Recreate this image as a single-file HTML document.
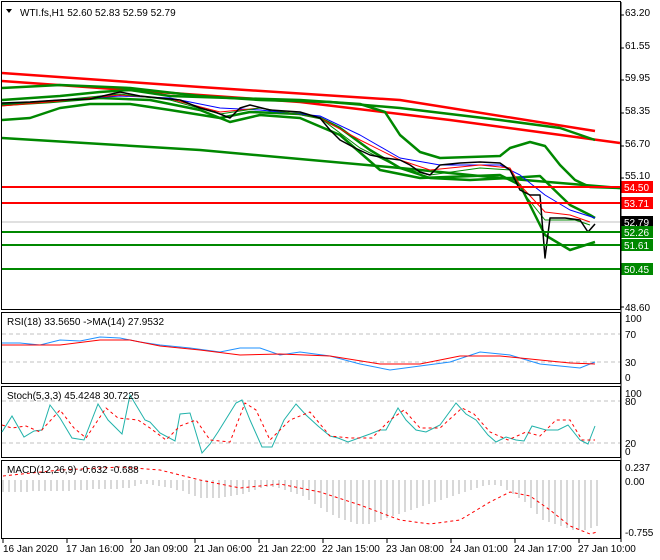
<!DOCTYPE html>
<html><head><style>
body{margin:0;background:#fff;}
svg{display:block;font-family:"Liberation Sans",sans-serif;}
.t{font-size:10px;fill:#000;}
</style></head><body>
<svg width="660" height="560" viewBox="0 0 660 560">
<rect width="660" height="560" fill="#fff"/>
<g fill="none" stroke="#000" stroke-width="1">
<rect x="1.5" y="1.5" width="619" height="308"/>
<rect x="1.5" y="312.5" width="619" height="71"/>
<rect x="1.5" y="386.5" width="619" height="71"/>
<rect x="1.5" y="460.5" width="619" height="78"/>
</g>
<g fill="none" stroke-linejoin="round">
<line x1="2" y1="222" x2="620" y2="222" stroke="#c0c0c0"/>
<polyline stroke="#f00" stroke-width="2.5" points="2,73 200,87 400,100 595,131"/>
<polyline stroke="#f00" stroke-width="2.5" points="2,81 100,88 300,102 450,120 620,143"/>
<polyline stroke="#080" stroke-width="2.5" points="2,138 200,150 400,168 500,178 620,188"/>
<polyline stroke="#080" stroke-width="2.5" points="2,88 60,85 130,88 200,96 260,100 330,102 400,108 500,120 560,128 595,140"/>
<polyline stroke="#080" stroke-width="2.5" points="2,100 60,96 100,92 130,90 170,96 230,98 300,100 360,104 385,112 400,135 420,152 440,158 500,156 510,148 530,142 545,146 560,165 575,180 590,187 620,188"/>
<polyline stroke="#080" stroke-width="2.5" points="2,120 30,118 60,108 90,104 130,104 170,110 220,118 250,112 300,114 320,118 340,128 370,150 400,168 430,178 470,180 510,178 540,176 570,205 590,215 595,218"/>
<polyline stroke="#080" stroke-width="2.5" points="2,105 50,102 100,98 150,100 200,110 230,122 260,115 300,118 340,135 380,170 420,178 500,175 520,185 545,235 570,250 595,242"/>
<polyline stroke="#00f" stroke-width="1" points="2,104 60,100 120,96 170,98 220,108 260,110 320,116 360,135 400,158 440,165 500,165 520,175 545,195 570,210 595,218"/>
<polyline stroke="#f00" stroke-width="1" points="2,106 60,101 120,95 170,99 220,112 260,108 320,118 360,140 400,160 430,170 480,165 510,168 520,185 545,212 570,215 590,222"/>
<polyline stroke="#080" stroke-width="1" points="2,104 60,100 120,94 170,100 220,114 260,108 320,118 360,148 400,168 430,175 480,168 510,170 525,195 545,220 575,220 590,225"/>
<polyline stroke="#000" stroke-width="1.5" points="2,103 30,102 60,100 90,99 120,92 140,96 160,98 180,100 200,108 215,112 230,118 240,108 250,105 270,110 300,112 320,118 330,130 340,140 355,148 370,155 385,158 400,160 410,165 420,172 430,175 440,165 460,163 480,162 500,163 510,170 520,190 530,195 540,195 545,258 550,218 565,218 580,220 588,232 595,224"/>
</g>
<g stroke="#f00" stroke-width="2">
<line x1="2" y1="187" x2="620" y2="187"/><line x1="2" y1="203" x2="620" y2="203"/>
</g>
<g stroke="#080" stroke-width="2">
<line x1="2" y1="232" x2="620" y2="232"/><line x1="2" y1="245" x2="620" y2="245"/><line x1="2" y1="269" x2="620" y2="269"/>
</g>
<rect x="621" y="181" width="32" height="12" fill="#f00"/><text x="624" y="191" class="t" style="fill:#fff">54.50</text>
<rect x="621" y="197" width="32" height="12" fill="#f00"/><text x="624" y="207" class="t" style="fill:#fff">53.71</text>
<rect x="621" y="216" width="32" height="12" fill="#000"/><text x="624" y="226" class="t" style="fill:#fff">52.79</text>
<rect x="621" y="226" width="32" height="12" fill="#080"/><text x="624" y="236" class="t" style="fill:#fff">52.26</text>
<rect x="621" y="239" width="32" height="12" fill="#080"/><text x="624" y="249" class="t" style="fill:#fff">51.61</text>
<rect x="621" y="263" width="32" height="12" fill="#080"/><text x="624" y="273" class="t" style="fill:#fff">50.45</text>
<text x="625" y="16" class="t">63.20</text>
<text x="625" y="49" class="t">61.55</text>
<text x="625" y="81" class="t">59.95</text>
<text x="625" y="114" class="t">58.35</text>
<text x="625" y="147" class="t">56.70</text>
<text x="625" y="179" class="t">55.10</text>
<text x="625" y="311" class="t">48.60</text>
<text x="20" y="16" class="t">WTI.fs,H1  52.60 52.83 52.59 52.79</text>
<polygon points="6,9 12,9 9,13" fill="#000"/>
<g stroke="#c0c0c0" stroke-dasharray="4,3"><line x1="2" y1="334" x2="620" y2="334"/><line x1="2" y1="362" x2="620" y2="362"/></g>
<polyline fill="none" stroke="#1e90ff" points="2,343 20,343 40,345 60,340 80,341 100,337 120,338 140,342 160,345 190,348 220,352 240,348 260,348 280,355 300,352 330,356 360,364 390,370 420,366 450,362 480,352 510,355 540,364 560,366 580,368 595,362"/>
<polyline fill="none" stroke="#f00" points="2,345 60,345 100,340 130,340 160,346 200,350 240,355 280,354 330,356 380,364 420,364 460,356 500,356 540,360 570,363 595,364"/>
<text x="7" y="325" class="t">RSI(18) 33.5650  -&gt;MA(14) 27.9532</text>
<text x="625" y="322" class="t">100</text><text x="625" y="338" class="t">70</text><text x="625" y="366" class="t">30</text><text x="625" y="381" class="t">0</text>
<g stroke="#c0c0c0" stroke-dasharray="4,3"><line x1="2" y1="401" x2="620" y2="401"/><line x1="2" y1="443" x2="620" y2="443"/></g>
<polyline fill="none" stroke="#20b2aa" points="2,432 12,416 24,437 34,431 42,430 50,405 60,418 72,438 84,440 98,404 108,420 122,434 130,395 145,420 150,422 160,433 175,441 180,414 190,413 202,453 210,444 218,432 236,403 242,400 250,420 262,447 272,447 284,420 296,404 306,415 318,426 330,436 338,438 348,442 370,434 380,430 386,430 398,408 406,420 416,430 426,432 440,425 456,403 466,414 476,420 488,435 496,442 506,437 516,440 524,441 532,426 546,430 558,430 568,425 580,440 588,444 595,426"/>
<polyline fill="none" stroke="#f00" stroke-dasharray="3,3" points="2,425 12,428 26,426 40,432 60,410 74,428 86,438 106,408 118,418 138,420 150,428 166,440 180,426 196,420 210,440 230,442 245,403 256,410 270,440 290,420 310,412 330,436 350,438 372,438 390,420 404,410 420,428 440,428 462,408 474,414 490,432 508,440 526,432 540,436 556,420 570,420 582,440 595,440"/>
<text x="7" y="399" class="t">Stoch(5,3,3) 45.4248 30.7225</text>
<text x="625" y="397" class="t">100</text><text x="625" y="405" class="t">80</text><text x="625" y="447" class="t">20</text><text x="625" y="455" class="t">0</text>
<g stroke="#b0b0b0" stroke-width="1">
<path d="M3 480v12M9 480v12M15 480v12M21 480v12M27 480v12M33 480v11M39 480v11M45 480v11M51 480v11M57 480v11M63 480v11M69 480v11M75 480v10M81 480v10M87 480v10M93 480v9M99 480v9M105 480v9M111 480v9M117 480v9M123 480v8M129 480v8M135 480v6M141 480v4M147 480v4M153 480v5M159 480v6M165 480v7M171 480v8M177 480v10M183 480v11M189 480v14M195 480v16M201 480v18M207 480v18M213 480v18M219 480v18M225 480v17M231 480v16M237 480v15M243 480v14M249 480v12M255 480v10M261 480v8M267 480v7M273 480v7M279 480v8M285 480v10M291 480v12M297 480v14M303 480v16M309 480v20M315 480v24M321 480v28M327 480v32M333 480v35M339 480v38M345 480v40M351 480v42M357 480v44M363 480v44M369 480v44M375 480v42M381 480v40M387 480v38M393 480v36M399 480v34M405 480v32M411 480v30M417 480v28M423 480v26M429 480v24M435 480v22M441 480v20M447 480v18M453 480v16M459 480v14M465 480v12M471 480v10M477 480v8M483 480v6M489 480v5M495 480v5M501 480v6M507 480v10M513 480v14M519 480v18M525 480v22M531 480v28M537 480v34M543 480v40M549 480v42M555 480v44M561 480v46M567 480v48M573 480v50M579 480v50M585 480v50M591 480v48M597 480v46"/>
</g>
<polyline fill="none" stroke="#f00" stroke-dasharray="3,3" points="3,476 60,470 120,467 160,470 200,480 240,488 280,484 320,492 360,505 400,520 430,524 460,520 490,502 510,492 530,496 550,510 570,526 590,534 597,532"/>
<text x="7" y="473" class="t">MACD(12,26,9) -0.632 -0.688</text>
<text x="625" y="471" class="t">0.237</text><text x="625" y="485" class="t">0.00</text><text x="625" y="536" class="t">-0.755</text>
<g stroke="#000"><path d="M3 539v4M67 539v4M131 539v4M195 539v4M259 539v4M323 539v4M387 539v4M451 539v4M515 539v4M579 539v4M621 2v540M621 15h3M621 48h3M621 80h3M621 113h3M621 146h3M621 178h3M621 307h3"/></g>
<text x="3" y="552" class="t">16 Jan 2020</text>
<text x="66" y="552" class="t">17 Jan 16:00</text>
<text x="130" y="552" class="t">20 Jan 09:00</text>
<text x="194" y="552" class="t">21 Jan 06:00</text>
<text x="258" y="552" class="t">21 Jan 22:00</text>
<text x="322" y="552" class="t">22 Jan 15:00</text>
<text x="386" y="552" class="t">23 Jan 08:00</text>
<text x="450" y="552" class="t">24 Jan 01:00</text>
<text x="514" y="552" class="t">24 Jan 17:00</text>
<text x="578" y="552" class="t">27 Jan 10:00</text>
</svg>
</body></html>
